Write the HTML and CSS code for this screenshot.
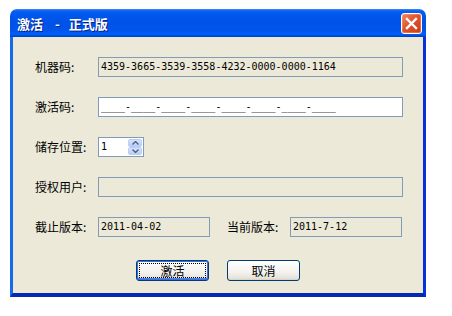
FILE: index.html
```html
<!DOCTYPE html>
<html lang="zh-CN">
<head>
  <meta charset="UTF-8" />
  <title>激活 - 正式版</title>
  <link rel="stylesheet" href="styles.css">
</head>
<body>
  <div class="window" role="dialog" aria-label="激活 - 正式版">
    <div class="titlebar">
      <span class="title">激活<span class="dash">-</span>正式版</span>
      <button class="close" aria-label="关闭">
        <svg width="13" height="13" viewBox="0 0 13 13">
          <path d="M2 2 L11 11 M11 2 L2 11" stroke="#fff" stroke-width="2.4" stroke-linecap="square" />
        </svg>
      </button>
    </div>

    <div class="client">
      <div class="row">
        <label class="label">机器码:</label>
        <div class="field readonly wide">4359-3665-3539-3558-4232-0000-0000-1164</div>
      </div>

      <div class="row">
        <label class="label">激活码:</label>
        <div class="field wide">____-____-____-____-____-____-____-____</div>
      </div>

      <div class="row">
        <label class="label">储存位置:</label>
        <div class="spin">
          <span class="spin-value">1</span>
          <div class="spin-btns">
            <span class="spin-btn">
              <svg width="7" height="4" viewBox="0 0 7 4"><path d="M0.5 3.5 L3.5 0.5 L6.5 3.5" fill="none" stroke="#4d6185" stroke-width="1.4" /></svg>
            </span>
            <span class="spin-btn">
              <svg width="7" height="4" viewBox="0 0 7 4"><path d="M0.5 0.5 L3.5 3.5 L6.5 0.5" fill="none" stroke="#4d6185" stroke-width="1.4" /></svg>
            </span>
          </div>
        </div>
      </div>

      <div class="row">
        <label class="label">授权用户:</label>
        <div class="field readonly wide"></div>
      </div>

      <div class="row">
        <label class="label">截止版本:</label>
        <div class="field readonly short">2011-04-02</div>
        <label class="label label-mid">当前版本:</label>
        <div class="field readonly short">2011-7-12</div>
      </div>

      <div class="buttons">
        <button class="btn btn-default"><span class="focus">激活</span></button>
        <button class="btn">取消</button>
      </div>
    </div>
  </div>
</body>
</html>
```

FILE: styles.css
```css
:root {
  --face: #ece9d8;
  --field-border: #7f9db9;
  --btn-border: #003c74;
  --cjk: "Noto Sans CJK SC", "DejaVu Sans", sans-serif;
  --mono: "DejaVu Sans Mono", "Liberation Mono", monospace;
}

body {
  margin: 0;
  background: #fff;
  font-family: var(--cjk);
  font-size: 12px;
  color: #000;
}

.window {
  width: 416px;
  margin: 9px 0 0 10px;
}

.titlebar {
  height: 28px;
  display: flex;
  align-items: center;
  justify-content: space-between;
  padding: 0 4px 0 7px;
  box-sizing: border-box;
  border-radius: 7px 7px 0 0;
  background: linear-gradient(to bottom,
    #3d8bf8 0px, #0a5ff0 2px, #0058ee 5px, #0052e6 14px,
    #0055ec 22px, #0060fb 25px, #0049d6 27px, #0040c4 28px);
}

.title {
  color: #fff;
  font-weight: bold;
  font-size: 13px;
  text-shadow: 1px 1px 0 #0a1f80;
  line-height: 1;
  padding-top: 1px;
}

.title .dash {
  margin: 0 9px 0 12px;
}

.close {
  width: 21px;
  height: 21px;
  padding: 0;
  display: flex;
  align-items: center;
  justify-content: center;
  border: 1px solid #fff;
  border-radius: 3px;
  background: linear-gradient(to bottom right, #f08a62, #e1532b 45%, #c73b16);
  box-shadow: inset 0 0 0 1px rgba(255, 170, 140, 0.4);
}

.client {
  background: var(--face);
  border-style: solid;
  border-width: 0 3px 4px 3px;
  border-color: #0a58e6 #0831d9 #0428b8 #166aee;
  padding: 20px 20px 12px 0;
}

.row {
  display: flex;
  align-items: center;
  height: 20px;
  margin-bottom: 20px;
}

.label {
  width: 63px;
  padding-left: 22px;
  line-height: 20px;
  white-space: nowrap;
}

.label-mid {
  padding-left: 17px;
}

.field {
  height: 20px;
  box-sizing: border-box;
  border: 1px solid var(--field-border);
  background: #fff;
  font-family: var(--mono);
  font-size: 10px;
  line-height: 18px;
  padding-left: 2px;
  white-space: nowrap;
  overflow: hidden;
}

.field.readonly {
  background: var(--face);
}

.wide {
  width: 305px;
}

.short {
  width: 112px;
}

.spin {
  width: 46px;
  height: 20px;
  box-sizing: border-box;
  border: 1px solid var(--field-border);
  background: #fff;
  display: flex;
  justify-content: space-between;
  padding: 1px 1px 1px 2px;
}

.spin-value {
  font-family: var(--mono);
  font-size: 10px;
  line-height: 16px;
}

.spin-btns {
  width: 14px;
  display: flex;
  flex-direction: column;
}

.spin-btn {
  flex: 1;
  display: flex;
  align-items: center;
  justify-content: center;
  background: linear-gradient(to bottom, #d6e2fc, #b9cdf6);
  border: 1px solid #bccdf3;
  border-radius: 2px;
}

.buttons {
  display: flex;
  justify-content: center;
  gap: 18px;
  padding-left: 20px;
  margin-top: 23px;
}

.btn {
  width: 73px;
  height: 21px;
  padding: 0;
  border: 1px solid var(--btn-border);
  border-radius: 3px;
  background: linear-gradient(to bottom, #ffffff, #f3f2ee 60%, #e6e3da 90%, #d6d0c5);
  font-family: var(--cjk);
  font-size: 12px;
  color: #000;
  line-height: 17px;
}

.btn-default {
  box-shadow: inset 0 0 0 1px #3d6ee0, inset 0 -1px 0 1px #4f82ea;
  padding: 2px;
}

.focus {
  display: block;
  height: 100%;
  box-sizing: border-box;
  border: 1px dotted #000;
  line-height: 13px;
}
```
